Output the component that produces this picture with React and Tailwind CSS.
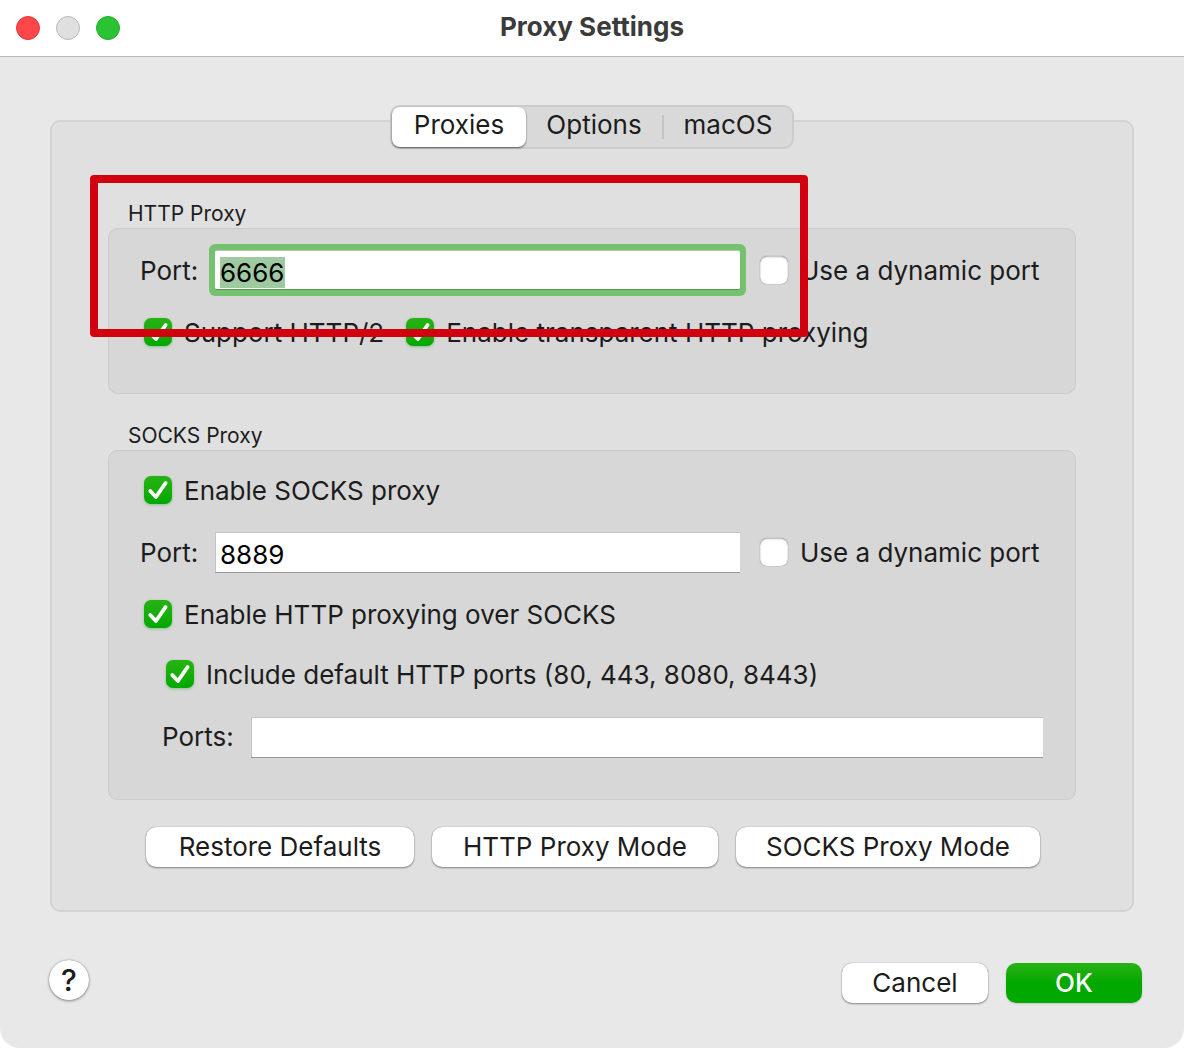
import React from 'react';
import { useEffect, useRef, useState } from 'react';

const tabs = [
  { name: 'Proxies', width: 'w-[134px]' },
  { name: 'Options', width: 'w-[138px]' },
  { name: 'macOS', width: 'w-[128px]' },
];

const CheckBox = ({ label, defaultChecked = false, className = '' }) => (
  <label className={`flex h-10 items-center gap-3 whitespace-nowrap ${className}`}>
    <span className="grid size-7 shrink-0">
      <input
        type="checkbox"
        defaultChecked={defaultChecked}
        className="peer col-start-1 row-start-1 size-7 appearance-none rounded-[7px] bg-white shadow-[inset_0_1px_2px_rgba(0,0,0,0.3),0_0_1px_rgba(0,0,0,0.5)] checked:bg-linear-to-b checked:from-[#25b314] checked:to-[#00a800] checked:shadow-[0_1px_3px_rgba(0,150,0,0.35)]"
      />
      <svg
        viewBox="0 0 28 28"
        className="pointer-events-none invisible col-start-1 row-start-1 size-7 peer-checked:visible"
        fill="none"
        stroke="white"
        strokeWidth="3.8"
        strokeLinecap="round"
        strokeLinejoin="round"
      >
        <path d="M6.3 15 L11.9 21 L21.6 7" />
      </svg>
    </span>
    <span className="pt-0.5">{label}</span>
  </label>
);

const Group = ({ title, className = '', children }) => (
  <fieldset className="min-w-0">
    <legend className="h-7 pl-5 text-[21px] leading-7">{title}</legend>
    <div
      className={`flex flex-col rounded-[10px] bg-[#d7d7d7] pr-[33px] pl-8 inset-ring inset-ring-[#cbcbcb] ${className}`}
    >
      {children}
    </div>
  </fieldset>
);

const field =
  'h-10 min-w-0 flex-1 border-t border-l border-[#c4c4c4] bg-white px-1 pt-1 leading-8 text-black outline-0 shadow-[0_1px_0_#969696]';

const pushButton =
  'h-10 rounded-[10px] bg-white whitespace-nowrap shadow-[0_0_1px_rgba(0,0,0,0.45),0_1px_2px_rgba(0,0,0,0.4)]';

export default function App() {
  const [tab, setTab] = useState('Proxies');
  const portRef = useRef(null);

  useEffect(() => {
    portRef.current.focus();
    portRef.current.select();
  }, []);

  return (
    <div className="min-h-screen bg-white font-['Inter',sans-serif] text-[26px] leading-8 text-[#1c1c1c]">
      <header className="grid h-14 grid-cols-[1fr_auto_1fr] items-center px-4">
        <div className="flex gap-4">
          <button aria-label="Close" className="size-6 rounded-full border border-[#e0383a] bg-[#ff4749]" />
          <button aria-label="Minimize" className="size-6 rounded-full border border-[#b9b9b9] bg-[#dfdfdf]" />
          <button aria-label="Zoom" className="size-6 rounded-full border border-[#22ab2a] bg-[#2ac333]" />
        </div>
        <h1 className="pb-0.5 font-bold text-[#3b3b3b]">Proxy Settings</h1>
      </header>

      <main className="rounded-b-[20px] border-t border-[#b8b8b8] bg-[#e8e8e8] pt-12 pb-[45px]">
        <div className="px-[50px]">
          <div
            role="tablist"
            className="relative mx-auto flex h-11 w-fit rounded-[10px] border-2 border-[#cccccc] bg-[#d9d9d9]"
          >
            {tabs.map((t, i) => (
              <button
                key={t.name}
                role="tab"
                aria-selected={tab === t.name}
                onClick={() => setTab(t.name)}
                className={`flex items-center rounded-lg pb-1 ${t.width} ${
                  tab === t.name ? 'bg-white shadow-[0_1px_2px_rgba(0,0,0,0.6)]' : ''
                }`}
              >
                <span className="flex-1">{t.name}</span>
                {i === 1 && <span className="mt-1 h-6 w-0.5 bg-[#c4c4c4]" />}
              </button>
            ))}
          </div>

          <div className="-mt-[29px] rounded-[10px] border-2 border-[#d3d3d3] bg-[#e0e0e0] px-14 pt-[78px] pb-[43px]">
            <div className="relative">
              <Group title="HTTP Proxy" className="gap-[22px] pt-[22px] pb-[42px]">
                <div className="flex items-center">
                  <label htmlFor="http-port" className="w-[75px] pt-0.5">
                    Port:
                  </label>
                  <input
                    id="http-port"
                    ref={portRef}
                    defaultValue="6666"
                    className="h-10 min-w-0 flex-1 rounded-[2px] border-t border-b border-t-[#b5c4b2] border-b-[#55934e] bg-white px-[5px] pt-1 leading-8 text-black ring-6 ring-[#76c16f] outline-0 selection:bg-[#9ec8a0]/99 selection:text-black"
                  />
                  <CheckBox label="Use a dynamic port" className="ml-5 w-[283px]" />
                </div>
                <div className="flex gap-[22px] pl-1">
                  <CheckBox label="Support HTTP/2" defaultChecked />
                  <CheckBox label="Enable transparent HTTP proxying" defaultChecked />
                </div>
              </Group>
              {/* highlight frame around the port setting */}
              <div className="pointer-events-none absolute -top-[25px] right-[268px] -left-[18px] h-[162px] rounded-[4px] border-8 border-[#d2000f]" />
            </div>

            <div className="mt-7">
              <Group title="SOCKS Proxy" className="gap-[22px] pt-5 pb-[43px]">
                <CheckBox label="Enable SOCKS proxy" defaultChecked className="pl-1" />
                <div className="flex items-center">
                  <label htmlFor="socks-port" className="w-[75px] pt-0.5">
                    Port:
                  </label>
                  <input id="socks-port" defaultValue="8889" className={field} />
                  <CheckBox label="Use a dynamic port" className="ml-5 w-[283px]" />
                </div>
                <CheckBox label="Enable HTTP proxying over SOCKS" defaultChecked className="pl-1" />
                <div className="-mt-0.5 flex flex-col gap-[23px] pl-[22px]">
                  <CheckBox label="Include default HTTP ports (80, 443, 8080, 8443)" defaultChecked className="pl-1" />
                  <div className="flex items-center">
                    <label htmlFor="extra-ports" className="w-[89px]">
                      Ports:
                    </label>
                    <input id="extra-ports" className={field} />
                  </div>
                </div>
              </Group>
            </div>

            <div className="mt-[27px] flex justify-center gap-[18px] pl-0.5">
              <button className={`${pushButton} w-[268px]`}>Restore Defaults</button>
              <button className={`${pushButton} w-[286px]`}>HTTP Proxy Mode</button>
              <button className={`${pushButton} w-[304px]`}>SOCKS Proxy Mode</button>
            </div>
          </div>
        </div>

        <footer className="flex items-start pt-12 pr-[42px] pl-[49px]">
          <button
            aria-label="Help"
            className="size-10 rounded-full bg-white text-[30px] font-medium shadow-[0_0_1px_rgba(0,0,0,0.45),0_1px_3px_rgba(0,0,0,0.4)]"
          >
            ?
          </button>
          <button className={`${pushButton} mt-[3px] ml-auto w-[146px]`}>Cancel</button>
          <button className="mt-[3px] ml-[18px] h-10 w-[136px] rounded-[10px] bg-linear-to-b from-[#25b314] via-[#00a800] to-[#00a800] font-medium text-white shadow-[0_1px_2px_rgba(0,0,0,0.15)]">
            OK
          </button>
        </footer>
      </main>
    </div>
  );
}
